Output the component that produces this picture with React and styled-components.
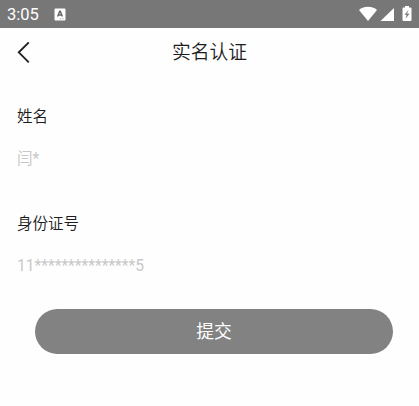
import React from 'react';
import styled, { createGlobalStyle } from 'styled-components';

const GlobalStyle = createGlobalStyle`
  * { box-sizing: border-box; }
  body {
    margin: 0;
    background: #fff;
    font-family: Roboto, "Noto Sans CJK SC", sans-serif;
    overflow: hidden;
  }
`;

const Screen = styled.div`
  display: flex;
  flex-direction: column;
  height: 406px;
  background: #fefefe;
`;

const StatusBar = styled.div`
  display: flex;
  align-items: center;
  height: 28px;
  padding: 0 6px 0 7px;
  background: #777;
  color: #fff;
`;

const Clock = styled.span`
  width: 47px;
  padding-top: 2px;
  font-size: 16.5px;
  font-weight: 450;
  line-height: 26px;
`;

const StatusIcons = styled.div`
  display: flex;
  align-items: center;
  margin-left: auto;
`;

const Header = styled.header`
  display: grid;
  grid-template-columns: 60px 1fr 60px;
  align-items: center;
  height: 48px;
`;

const BackButton = styled.button`
  display: flex;
  width: 48px;
  height: 48px;
  padding: 12px 0 0 16px;
  border: 0;
  background: none;
`;

const Title = styled.h1`
  margin: 0;
  padding-top: 2px;
  text-align: center;
  font-size: 18.8px;
  font-weight: 350;
  line-height: 46px;
  color: #1c1c1c;
`;

const Form = styled.form`
  display: flex;
  flex-direction: column;
  padding: 29px 26px 0 17px;
`;

const Field = styled.div`
  display: flex;
  flex-direction: column;
  gap: 18px;
  margin-bottom: 41px;
`;

const Label = styled.label`
  font-size: 15.5px;
  font-weight: 350;
  line-height: 24px;
  color: #1c1c1c;
`;

const Value = styled.span`
  font-size: 15.6px;
  font-weight: 400;
  font-kerning: none;
  line-height: 24px;
  color: #c8c8c8;
`;

const SubmitButton = styled.button`
  width: 358px;
  height: 45px;
  margin: -10px 0 0 18px;
  padding: 0;
  border: 0;
  border-radius: 23px;
  background: #828282;
  color: #fff;
  font-family: inherit;
  font-size: 17.8px;
  font-weight: 400;
  line-height: 44px;
`;

export default function App() {
  return (
    <Screen>
      <GlobalStyle />
      <StatusBar>
        <Clock>3:05</Clock>
        <svg width="12" height="13" viewBox="0 0 12 13">
          <rect x="0.5" y="0.5" width="11" height="12" rx="1" fill="#fff" />
          <path d="M3.6 8.6 5.7 3.2h.6L8.4 8.6M4.4 7h3.2" fill="none" stroke="#666" strokeWidth="1.4" />
          <path d="M6 10.8h1.4M8.6 10.8h1" stroke="#777" strokeWidth="0.7" />
        </svg>
        <StatusIcons>
          <svg width="54" height="16" viewBox="0 0 54 16">
            <path d="M0 4C5-.4 13-.4 18 4L9 15Z" fill="#fff" />
            <path d="M35 2v13H21.5Z" fill="#fff" />
            <path d="M46 0h4v1.5h1.5q1 0 1 1V14q0 1-1 1h-7q-1 0-1-1V2.500q0-1 1-1H46Z" fill="#fff" />
            <path d="M49.5 4 45.500 8.700h2.200l-1.200 4 4-5H48Z" fill="#777" />
          </svg>
        </StatusIcons>
      </StatusBar>
      <Header>
        <BackButton aria-label="返回">
          <svg width="15" height="24" viewBox="0 0 15 24">
            <path d="M12.800 2.300 2.800 12.300l10 10" fill="none" stroke="#222" strokeWidth="1.9" />
          </svg>
        </BackButton>
        <Title>实名认证</Title>
      </Header>
      <Form>
        <Field>
          <Label>姓名</Label>
          <Value>闫*</Value>
        </Field>
        <Field>
          <Label>身份证号</Label>
          <Value>11***************5</Value>
        </Field>
        <SubmitButton type="button">提交</SubmitButton>
      </Form>
    </Screen>
  );
}
